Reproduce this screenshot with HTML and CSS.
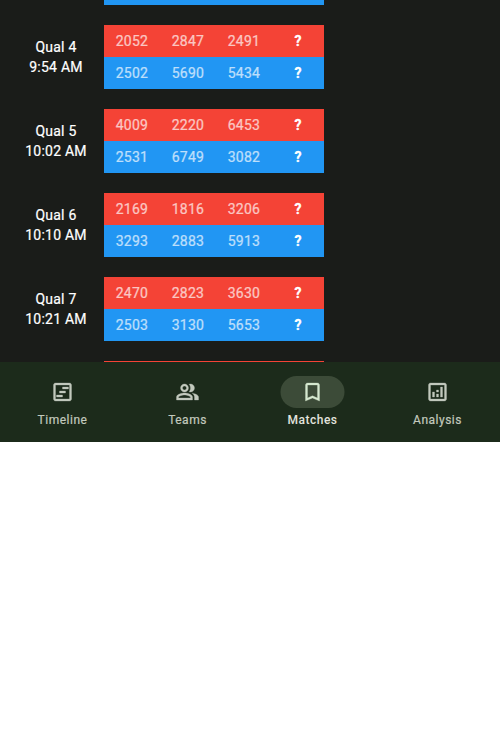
FILE: index.html
```html
<!DOCTYPE html>
<html lang="en">
<head>
<meta charset="utf-8">
<title>Matches</title>
<link rel="stylesheet" href="styles.css">
</head>
<body>
<div class="app">
  <main class="matches">
    <div class="match match-previous"><div class="label"></div><div class="alliances"><div class="row blue"></div></div></div>
    <div class="match">
      <div class="label">Qual 4<br>9:54 AM</div>
      <div class="alliances">
        <div class="row red"><span>2052</span><span>2847</span><span>2491</span><b>?</b></div>
        <div class="row blue"><span>2502</span><span>5690</span><span>5434</span><b>?</b></div>
      </div>
    </div>
    <div class="match">
      <div class="label">Qual 5<br>10:02 AM</div>
      <div class="alliances">
        <div class="row red"><span>4009</span><span>2220</span><span>6453</span><b>?</b></div>
        <div class="row blue"><span>2531</span><span>6749</span><span>3082</span><b>?</b></div>
      </div>
    </div>
    <div class="match">
      <div class="label">Qual 6<br>10:10 AM</div>
      <div class="alliances">
        <div class="row red"><span>2169</span><span>1816</span><span>3206</span><b>?</b></div>
        <div class="row blue"><span>3293</span><span>2883</span><span>5913</span><b>?</b></div>
      </div>
    </div>
    <div class="match">
      <div class="label">Qual 7<br>10:21 AM</div>
      <div class="alliances">
        <div class="row red"><span>2470</span><span>2823</span><span>3630</span><b>?</b></div>
        <div class="row blue"><span>2503</span><span>3130</span><span>5653</span><b>?</b></div>
      </div>
    </div>
    <div class="match match-next"><div class="label"></div><div class="alliances"><div class="row red"></div></div></div>
  </main>
  <nav class="nav">
    <a class="tab">
      <span class="pill"><svg viewBox="0.5 0 24 24"><path d="M19 5v14H5V5h14m0-2H5c-1.1 0-2 .9-2 2v14c0 1.1.9 2 2 2h14c1.1 0 2-.9 2-2V5c0-1.1-.9-2-2-2zM12 17H6v-2h6v2zm3-4H9v-2h6v2zm3-4h-6V7h6v2z"/></svg></span>
      <span class="name">Timeline</span>
    </a>
    <a class="tab">
      <span class="pill"><svg viewBox="0.5 0 24 24"><path d="M16.67 13.13C18.04 14.06 19 15.32 19 17v3h4v-3c0-2.18-3.57-3.47-6.33-3.87zM15 12c2.21 0 4-1.79 4-4s-1.79-4-4-4c-.47 0-.91.1-1.33.24C14.5 5.27 15 6.58 15 8s-.5 2.73-1.33 3.76c.42.14.86.24 1.33.24zM9 12c2.21 0 4-1.79 4-4s-1.79-4-4-4-4 1.79-4 4 1.79 4 4 4zm0-6c1.1 0 2 .9 2 2s-.9 2-2 2-2-.9-2-2 .9-2 2-2zm0 7c-2.67 0-8 1.34-8 4v3h16v-3c0-2.66-5.33-4-8-4zm6 5H3v-.99C3.2 16.29 6.3 15 9 15s5.8 1.29 6 2v1z"/></svg></span>
      <span class="name">Teams</span>
    </a>
    <a class="tab active">
      <span class="pill"><svg class="indicator" viewBox="0.5 0 64 32"><rect x="0" y="0" width="64" height="32" rx="16"/><path transform="translate(20 4)" d="M17 3H7c-1.1 0-2 .9-2 2v16l7-3 7 3V5c0-1.1-.9-2-2-2zm0 15l-5-2.18L7 18V5h10v13z"/></svg></span>
      <span class="name">Matches</span>
    </a>
    <a class="tab">
      <span class="pill"><svg viewBox="0.5 0 24 24"><path d="M19 3H5c-1.1 0-2 .9-2 2v14c0 1.1.9 2 2 2h14c1.1 0 2-.9 2-2V5c0-1.1-.9-2-2-2zm0 16H5V5h14v14zM7 12h2v5H7zM15 7h2v10h-2zM11 14h2v3h-2zM11 10h2v2h-2z"/></svg></span>
      <span class="name">Analysis</span>
    </a>
  </nav>
</div>
</body>
</html>
```
FILE: styles.css
```css
* { box-sizing: border-box; }
body { margin: 0; background: #fff; font-family: Roboto, sans-serif; }
.app { display: flex; flex-direction: column; height: 442px; background: #1a1c19; }
.matches { flex: 1; min-height: 0; overflow: hidden; display: flex; flex-direction: column; gap: 20px; }
.match { display: flex; flex: none; }
.label { width: 104px; padding: 12px 0 0 8px; text-align: center; color: #fff; font-size: 14px; font-weight: 400; line-height: 20px; letter-spacing: 0.25px; -webkit-text-stroke: 0.2px currentColor; }
.alliances { width: 220px; }
.row { display: grid; grid-template-columns: 56px 56px 56px 52px; height: 32px; line-height: 32px; text-align: center; font-size: 14px; letter-spacing: 0.25px; }
.row span { opacity: 0.7; color: #fff; -webkit-text-stroke: 0.2px #fff; }
.row b { color: #fff; font-weight: 700; -webkit-text-stroke: 0.3px #fff; }
.red { background: #f44336; }
.blue { background: #2196f3; }
.match-previous .row { height: 5px; }
.match-previous .label, .match-next .label { padding: 0; }
.nav { display: grid; grid-template-columns: repeat(4, 1fr); height: 80px; background: #1c2b1b; }
.tab { display: flex; flex-direction: column; align-items: center; padding-top: 14px; color: #c2c9bd; }
.pill { display: flex; align-items: center; justify-content: center; width: 64px; height: 32px; }
.pill svg { width: 24px; height: 24px; fill: currentColor; overflow: visible; }
.pill path { stroke: currentColor; stroke-width: 0.3px; }
.pill .indicator { width: 64px; height: 32px; }
.indicator rect { fill: #3c4b38; }
.name { margin-top: 4px; font-size: 12px; font-weight: 400; line-height: 16px; letter-spacing: 0.5px; -webkit-text-stroke: 0.2px currentColor; }
.active { color: #e2e3dd; }
.active .name { font-weight: 500; -webkit-text-stroke: 0; }
.active .pill { color: #d5e8cf; }
```
